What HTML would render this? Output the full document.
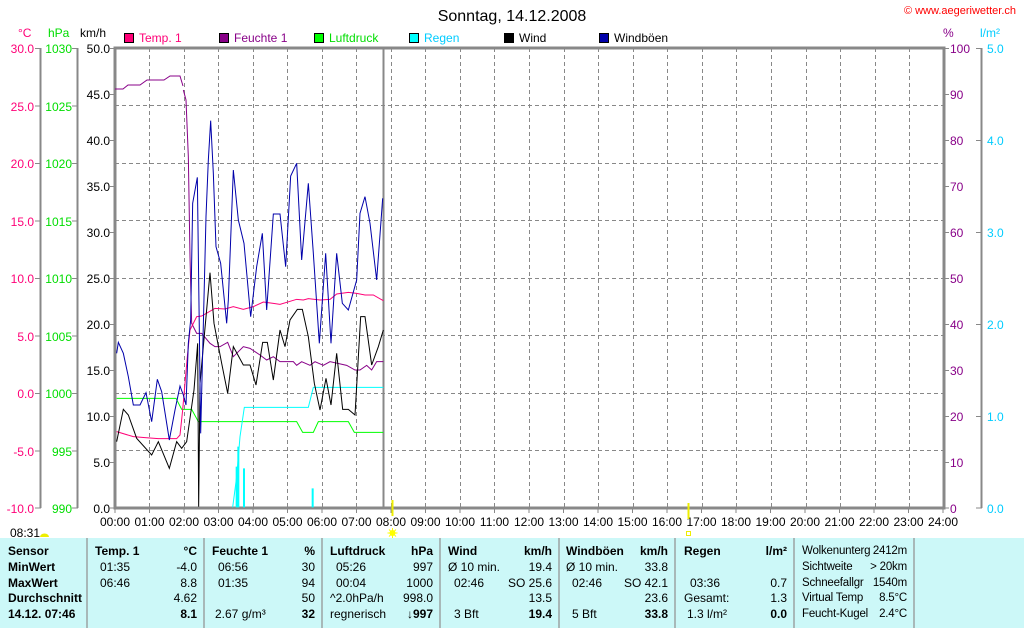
<!DOCTYPE html>
<html><head><meta charset="utf-8"><style>
body{margin:0;width:1024px;height:630px;background:#fff;overflow:hidden;font-family:"Liberation Sans",sans-serif;font-size:12px}
svg text{font-family:"Liberation Sans",sans-serif;font-size:12px}
#tbl{position:absolute;left:0;top:538px;width:1024px;height:90px;background:#ccf8f8}
.c{position:absolute;top:0;height:90px;border-right:2px solid #a8b8b8}
.r{position:absolute;left:0;right:0;height:16px;line-height:16px;white-space:nowrap}
.b{font-weight:bold}
.l{position:absolute;left:8px}.rt{position:absolute;right:6px}
</style></head><body>
<svg width="1024" height="538" style="position:absolute;left:0;top:0">
<text x="512" y="21" text-anchor="middle" style="font-size:16px">Sonntag, 14.12.2008</text>
<text x="1016" y="14" text-anchor="end" fill="#f00" style="font-size:11px">© www.aegeriwetter.ch</text>
<g style="font-size:12px">
<text x="18" y="37" fill="#f07">°C</text><text x="48" y="37" fill="#0d0">hPa</text><text x="80" y="37">km/h</text>
<text x="943" y="37" fill="#808">%</text><text x="980" y="37" fill="#0cf">l/m²</text>
<rect x="124.5" y="33.5" width="9" height="9" fill="#f07" stroke="#000"/><text x="139" y="42" fill="#f07">Temp. 1</text>
<rect x="219.5" y="33.5" width="9" height="9" fill="#808" stroke="#000"/><text x="234" y="42" fill="#808">Feuchte 1</text>
<rect x="314.5" y="33.5" width="9" height="9" fill="#0f0" stroke="#000"/><text x="329" y="42" fill="#0d0">Luftdruck</text>
<rect x="409.5" y="33.5" width="9" height="9" fill="#0ff" stroke="#000"/><text x="424" y="42" fill="#0cf">Regen</text>
<rect x="504.5" y="33.5" width="9" height="9" fill="#000" stroke="#000"/><text x="519" y="42">Wind</text>
<rect x="599.5" y="33.5" width="9" height="9" fill="#00a" stroke="#000"/><text x="614" y="42">Windböen</text>
</g>
<g stroke="#888" stroke-dasharray="4,3" stroke-width="1">
<path d="M115 105.5H944M115 163.5H944M115 220.5H944M115 278.5H944M115 335.5H944M115 393.5H944M115 450.5H944"/>
<path d="M149.5 48V508M184.5 48V508M218.5 48V508M253.5 48V508M287.5 48V508M322.5 48V508M356.5 48V508M425.5 48V508M460.5 48V508M494.5 48V508M529.5 48V508M564.5 48V508M598.5 48V508M633.5 48V508M667.5 48V508M702.5 48V508M736.5 48V508M771.5 48V508M806.5 48V508M840.5 48V508M875.5 48V508M909.5 48V508M391.5 48V508"/>
</g>
<rect x="115" y="48" width="829" height="460" fill="none" stroke="#888" stroke-width="3"/>
<path d="M383.5 48V508" stroke="#888" stroke-width="2"/>
<g stroke="#888" stroke-width="2"><path d="M40.5 48V508M77.5 48V508M981.5 48V508"/></g>
<g stroke="#888"><path d="M35 48.5h6M35 106h6M35 163.5h6M35 221h6M35 278.5h6M35 336h6M35 393.5h6M35 451h6M35 508h6"/>
<path d="M72 48.5h6M72 106h6M72 163.5h6M72 221h6M72 278.5h6M72 336h6M72 393.5h6M72 451h6M72 508h6"/>
<path d="M110 48.5h5M110 94.5h5M110 140.5h5M110 186.5h5M110 232.5h5M110 278.5h5M110 324.5h5M110 370.5h5M110 416.5h5M110 462.5h5M110 508h5"/>
<path d="M944 48.5h5M944 94.5h5M944 140.5h5M944 186.5h5M944 232.5h5M944 278.5h5M944 324.5h5M944 370.5h5M944 416.5h5M944 462.5h5M944 508h5"/>
<path d="M976 48.5h6M976 140.5h6M976 232.5h6M976 324.5h6M976 416.5h6M976 508h6"/>
<path d="M115 508v5M149.5 508v5M184 508v5M218.5 508v5M253 508v5M287.5 508v5M322 508v5M356.5 508v5M391 508v5M425.5 508v5M460 508v5M494.5 508v5M529 508v5M563.5 508v5M598 508v5M632.5 508v5M667 508v5M701.5 508v5M736 508v5M770.5 508v5M805 508v5M839.5 508v5M874 508v5M908.5 508v5M943 508v5"/></g>
<g fill="#f07" text-anchor="end"><text x="34" y="53">30.0</text><text x="34" y="111">25.0</text><text x="34" y="168">20.0</text><text x="34" y="226">15.0</text><text x="34" y="283">10.0</text><text x="34" y="341">5.0</text><text x="34" y="398">0.0</text><text x="34" y="456">-5.0</text><text x="34" y="513">-10.0</text></g>
<g fill="#0d0" text-anchor="end"><text x="72" y="53">1030</text><text x="72" y="111">1025</text><text x="72" y="168">1020</text><text x="72" y="226">1015</text><text x="72" y="283">1010</text><text x="72" y="341">1005</text><text x="72" y="398">1000</text><text x="72" y="456">995</text><text x="72" y="513">990</text></g>
<g text-anchor="end"><text x="110" y="53">50.0</text><text x="110" y="99">45.0</text><text x="110" y="145">40.0</text><text x="110" y="191">35.0</text><text x="110" y="237">30.0</text><text x="110" y="283">25.0</text><text x="110" y="329">20.0</text><text x="110" y="375">15.0</text><text x="110" y="421">10.0</text><text x="110" y="467">5.0</text><text x="110" y="513">0.0</text></g>
<g fill="#808"><text x="950" y="53">100</text><text x="950" y="99">90</text><text x="950" y="145">80</text><text x="950" y="191">70</text><text x="950" y="237">60</text><text x="950" y="283">50</text><text x="950" y="329">40</text><text x="950" y="375">30</text><text x="950" y="421">20</text><text x="950" y="467">10</text><text x="950" y="513">0</text></g>
<g fill="#0cf"><text x="987" y="53">5.0</text><text x="987" y="145">4.0</text><text x="987" y="237">3.0</text><text x="987" y="329">2.0</text><text x="987" y="421">1.0</text><text x="987" y="513">0.0</text></g>
<g text-anchor="middle"><text x="115" y="526">00:00</text><text x="149.5" y="526">01:00</text><text x="184" y="526">02:00</text><text x="218.5" y="526">03:00</text><text x="253" y="526">04:00</text><text x="287.5" y="526">05:00</text><text x="322" y="526">06:00</text><text x="356.5" y="526">07:00</text><text x="391" y="526">08:00</text><text x="425.5" y="526">09:00</text><text x="460" y="526">10:00</text><text x="494.5" y="526">11:00</text><text x="529" y="526">12:00</text><text x="563.5" y="526">13:00</text><text x="598" y="526">14:00</text><text x="632.5" y="526">15:00</text><text x="667" y="526">16:00</text><text x="701.5" y="526">17:00</text><text x="736" y="526">18:00</text><text x="770.5" y="526">19:00</text><text x="805" y="526">20:00</text><text x="839.5" y="526">21:00</text><text x="874" y="526">22:00</text><text x="908.5" y="526">23:00</text><text x="943" y="526">24:00</text></g>
<text x="10" y="537">08:31</text>
<path d="M40 537a4.5 3.5 0 0 1 9 0z" fill="#ee0"/>
<circle cx="392.5" cy="533" r="3" fill="#ff0"/><path d="M392.5 528v10M387.5 533h10M389 529.5l7 7M396 529.5l-7 7" stroke="#ff0"/>
<rect x="686.5" y="531.5" width="4" height="4" fill="none" stroke="#ee0"/>
<path d="M392.5 500v16M688.5 503v16" stroke="#ee0" stroke-width="2"/>
<polyline fill="none" stroke="#808" stroke-width="1" points="115,89 123,89 128,85 140,85 147,80 164,80 170,76 180,76 183,86"/>
<g transform="translate(100,90) scale(0.333333)" fill="none" stroke-width="3">
<polyline stroke="#808" points="250,0 258,30 265,200 270,500 275,700 290,730 305,730 330,760 345,770 360,770 383,757 400,800 430,770 450,775 480,795 500,810 520,800 540,815 580,815 590,826 605,815 630,826 645,815 670,826 690,815 740,826 765,840 780,840 800,826 815,840 830,815 850,815"/>
<polyline stroke="#0f0" points="50,925 228,925 245,958 275,958 295,995 590,995 608,1027 640,1027 655,995 745,995 763,1027 850,1027"/>
<polyline stroke="#0ff" points="398,1252 410,1160 420,1040 433,952 625,952 640,892 850,892"/>
<path stroke="#0ff" stroke-width="6" d="M410 1252V1130M415 1252V1070M432 1252V1135M638 1252V1195"/>
<polyline stroke="#f07" points="50,1025 100,1040 135,1043 175,1046 230,1046 240,1035 248,960 262,800 270,720 290,680 305,678 345,655 375,657 400,650 430,658 460,650 490,636 520,640 540,643 590,628 610,630 625,626 660,630 690,628 710,612 745,607 770,610 795,615 820,615 850,632"/>
<polyline stroke="#000" points="50,1055 70,958 85,975 110,1045 155,1095 175,1055 208,1135 230,1055 245,1075 260,1055 282,900 293,760 296,1250 300,880 330,548 342,700 365,820 383,910 400,770 430,825 450,825 468,885 488,757 502,757 520,870 540,720 555,770 570,690 592,658 607,658 625,740 643,880 660,960 678,865 693,945 710,790 728,958 745,958 765,975 782,680 795,680 815,825 835,770 850,720"/>
<polyline stroke="#00a" points="50,790 55,757 70,790 85,860 100,945 120,945 138,908 155,995 172,868 185,905 208,1050 225,960 240,888 250,915 258,945 265,760 272,690 278,340 292,262 302,1030 318,380 325,210 332,92 340,250 348,470 362,520 380,700 385,630 400,240 415,390 432,460 452,680 470,530 487,430 500,660 520,372 540,372 557,530 572,258 590,220 605,510 625,280 640,490 658,760 677,490 693,760 710,490 727,640 745,660 770,570 780,370 795,320 810,400 830,570 848,325"/>
</g>
</svg>
<div id="tbl">
<div class="c" style="left:0;width:86px"><div class="r b" style="top:5px"><span class="l">Sensor</span></div><div class="r b" style="top:21px"><span class="l">MinWert</span></div><div class="r b" style="top:37px"><span class="l">MaxWert</span></div><div class="r b" style="top:52px"><span class="l">Durchschnitt</span></div><div class="r b" style="top:68px"><span class="l">14.12. 07:46</span></div></div>
<div class="c" style="left:88px;width:115px"><div class="r b" style="top:5px"><span class="l" style="left:7px">Temp. 1</span><span class="rt">°C</span></div><div class="r" style="top:21px"><span class="l" style="left:12px">01:35</span><span class="rt">-4.0</span></div><div class="r" style="top:37px"><span class="l" style="left:12px">06:46</span><span class="rt">8.8</span></div><div class="r" style="top:52px"><span class="rt">4.62</span></div><div class="r b" style="top:68px"><span class="rt">8.1</span></div></div>
<div class="c" style="left:205px;width:116px"><div class="r b" style="top:5px"><span class="l" style="left:7px">Feuchte 1</span><span class="rt">%</span></div><div class="r" style="top:21px"><span class="l" style="left:13px">06:56</span><span class="rt">30</span></div><div class="r" style="top:37px"><span class="l" style="left:13px">01:35</span><span class="rt">94</span></div><div class="r" style="top:52px"><span class="rt">50</span></div><div class="r" style="top:68px"><span class="l" style="left:10px">2.67 g/m³</span><span class="rt b">32</span></div></div>
<div class="c" style="left:323px;width:116px"><div class="r b" style="top:5px"><span class="l" style="left:7px">Luftdruck</span><span class="rt">hPa</span></div><div class="r" style="top:21px"><span class="l" style="left:13px">05:26</span><span class="rt">997</span></div><div class="r" style="top:37px"><span class="l" style="left:13px">00:04</span><span class="rt">1000</span></div><div class="r" style="top:52px"><span class="l" style="left:7px">^2.0hPa/h</span><span class="rt">998.0</span></div><div class="r" style="top:68px"><span class="l" style="left:7px">regnerisch</span><span class="rt b">↓997</span></div></div>
<div class="c" style="left:441px;width:117px"><div class="r b" style="top:5px"><span class="l" style="left:7px">Wind</span><span class="rt">km/h</span></div><div class="r" style="top:21px"><span class="l" style="left:7px">Ø 10 min.</span><span class="rt">19.4</span></div><div class="r" style="top:37px"><span class="l" style="left:13px">02:46</span><span class="rt">SO 25.6</span></div><div class="r" style="top:52px"><span class="rt">13.5</span></div><div class="r" style="top:68px"><span class="l" style="left:13px">3 Bft</span><span class="rt b">19.4</span></div></div>
<div class="c" style="left:560px;width:114px"><div class="r b" style="top:5px"><span class="l" style="left:6px">Windböen</span><span class="rt">km/h</span></div><div class="r" style="top:21px"><span class="l" style="left:6px">Ø 10 min.</span><span class="rt">33.8</span></div><div class="r" style="top:37px"><span class="l" style="left:12px">02:46</span><span class="rt">SO 42.1</span></div><div class="r" style="top:52px"><span class="rt">23.6</span></div><div class="r" style="top:68px"><span class="l" style="left:12px">5 Bft</span><span class="rt b">33.8</span></div></div>
<div class="c" style="left:676px;width:117px"><div class="r b" style="top:5px"><span class="l">Regen</span><span class="rt">l/m²</span></div><div class="r" style="top:37px"><span class="l" style="left:14px">03:36</span><span class="rt">0.7</span></div><div class="r" style="top:52px"><span class="l">Gesamt:</span><span class="rt">1.3</span></div><div class="r" style="top:68px"><span class="l" style="left:11px">1.3 l/m²</span><span class="rt b">0.0</span></div></div>
<div class="c" style="left:795px;width:118px;font-size:11.5px;letter-spacing:-0.2px"><div class="r" style="top:5px"><span class="l" style="left:7px">Wolkenunterg</span><span class="rt">2412m</span></div><div class="r" style="top:21px"><span class="l" style="left:7px">Sichtweite</span><span class="rt">&gt; 20km</span></div><div class="r" style="top:37px"><span class="l" style="left:7px">Schneefallgr</span><span class="rt">1540m</span></div><div class="r" style="top:52px"><span class="l" style="left:7px">Virtual Temp</span><span class="rt">8.5°C</span></div><div class="r" style="top:68px"><span class="l" style="left:7px">Feucht-Kugel</span><span class="rt">2.4°C</span></div></div>
</div>
</body></html>
